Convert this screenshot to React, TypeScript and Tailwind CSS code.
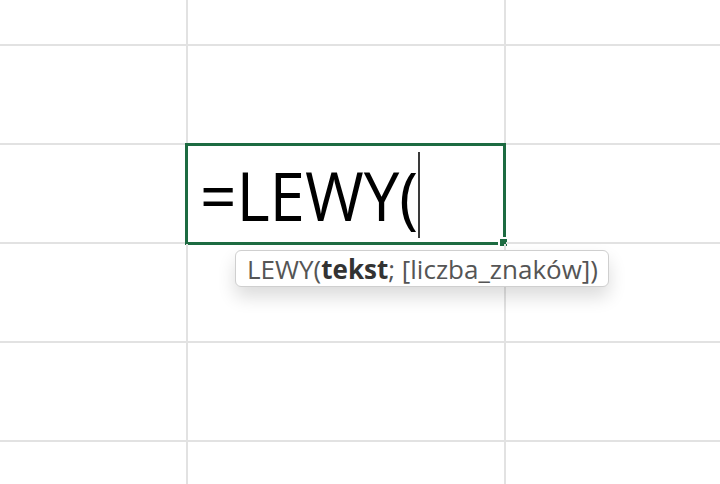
const rows = [46, 99, 99, 99, 99, 99];

function Cell({ active, last }: { active?: boolean; last?: boolean }) {
    return (
        <div className={`relative box-border h-full border-b-2 border-[#e2e2e2] ${last ? '' : 'border-r-2'}`}>
            {active && (
                <>
                    {/* zaznaczenie komórki */}
                    <div className="absolute -left-[3px] -right-[2px] -top-[2px] -bottom-[3px] border-[3px] border-[#1d6b41]" />
                    <div className="absolute -right-[3px] -bottom-[4px] h-[9px] w-[9px] border-l-2 border-t-2 border-white bg-[#1d6b41]" />

                    <div className="flex items-start pl-[12px]">
                        <span className="mt-[17px] origin-left scale-x-[0.95] text-[67px] leading-none text-black [font-family:'Open_Sans',sans-serif]">
                            =LEWY(
                        </span>
                        <div className="-ml-[12px] mt-[7px] h-[86px] w-[2px] bg-[#3a3a3a]" />
                    </div>

                    {/* podpowiedź funkcji */}
                    <div className="absolute left-[47px] top-[105px] z-10 flex h-[37px] items-center whitespace-nowrap rounded-[6px] border border-[#cfcfcf] bg-white pl-[11px] pr-[10px] text-[26px] leading-none text-[#555] shadow-[0_10px_18px_rgba(0,0,0,0.14)] [font-family:'Open_Sans',sans-serif]">
                        LEWY(<b className="font-bold text-[#333]">tekst</b>; [liczba_znaków])
                    </div>
                </>
            )}
        </div>
    );
}

export default function App() {
    return (
        <div className="h-[484px] w-[720px] overflow-hidden bg-white">
            <div className="grid grid-cols-[188px_318px_1fr]">
                {rows.map((h, r) => (
                    <div key={r} className="contents">
                        {[0, 1, 2].map((c) => (
                            <div key={c} style={{ height: h }}>
                                <Cell active={r === 2 && c === 1} last={c === 2} />
                            </div>
                        ))}
                    </div>
                ))}
            </div>
        </div>
    );
}
